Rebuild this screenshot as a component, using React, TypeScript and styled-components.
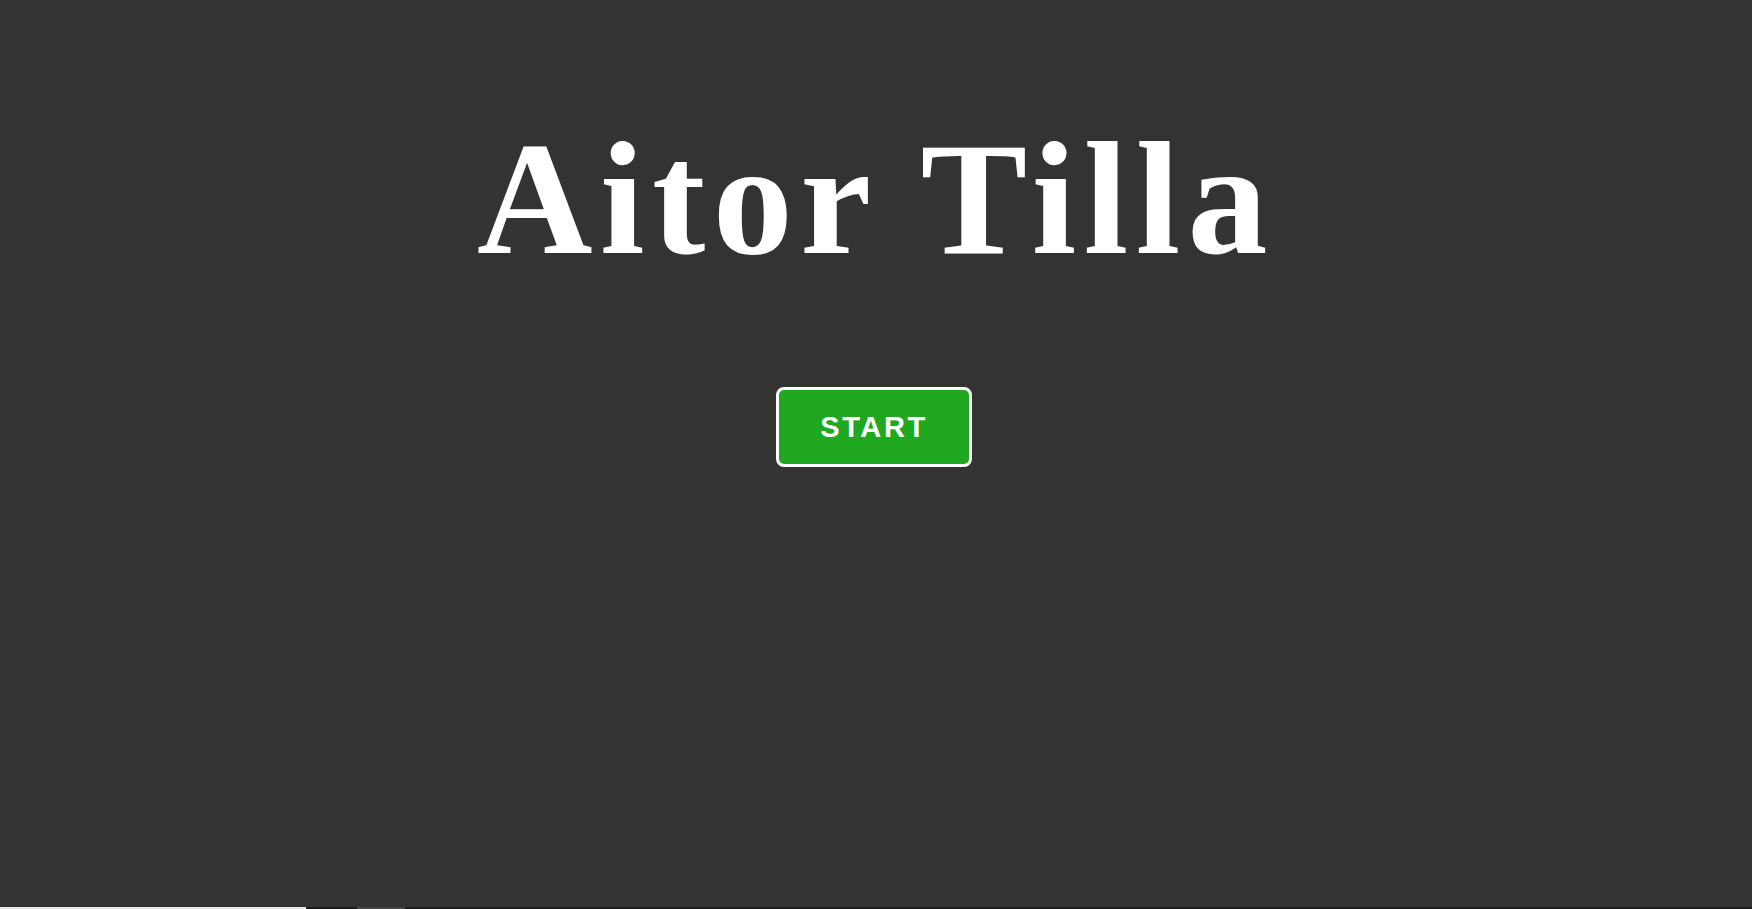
import React from "react";
import styled, { createGlobalStyle } from "styled-components";

const GlobalStyle = createGlobalStyle`
  html, body {
    margin: 0;
    padding: 0;
    background: #333333;
    overflow: hidden;
  }
  * { box-sizing: border-box; }
`;

const Page = styled.div`
  min-height: 100vh;
  display: flex;
  flex-direction: column;
  align-items: center;
  background: #333333;
`;

const Title = styled.h1`
  margin: 119px 0 0 0;
  font-family: "Liberation Serif", "Times New Roman", serif;
  font-weight: 700;
  font-size: 160px;
  line-height: 1;
  letter-spacing: 7.5px;
  color: #ffffff;
  white-space: nowrap;
`;

const StartButton = styled.button`
  margin: 108px 4px 0 0;
  width: 196px;
  height: 80px;
  background: #20a920;
  border: 3px solid #ffffff;
  border-radius: 8px;
  color: #ffffff;
  font-family: "Liberation Sans", Arial, sans-serif;
  font-weight: 700;
  font-size: 29px;
  letter-spacing: 2.6px;
  padding: 0;
  cursor: pointer;
`;

const Spacer = styled.div`
  flex: 1;
`;

const Strip = styled.div`
  width: 100%;
  height: 2px;
  display: flex;
  background: #1e1e1e;
`;

const Segment = styled.div<{ $w: number; $c: string }>`
  width: ${(p) => p.$w}px;
  height: 100%;
  background: ${(p) => p.$c};
  flex: none;
`;

export default function App() {
  return (
    <>
      <GlobalStyle />
      <Page>
        <Title>Aitor Tilla</Title>
        <StartButton>START</StartButton>
        <Spacer />
        <Strip>
          <Segment $w={306} $c="#e8e8e8" />
          <Segment $w={51} $c="#1b1b1b" />
          <Segment $w={48} $c="#474747" />
        </Strip>
      </Page>
    </>
  );
}
